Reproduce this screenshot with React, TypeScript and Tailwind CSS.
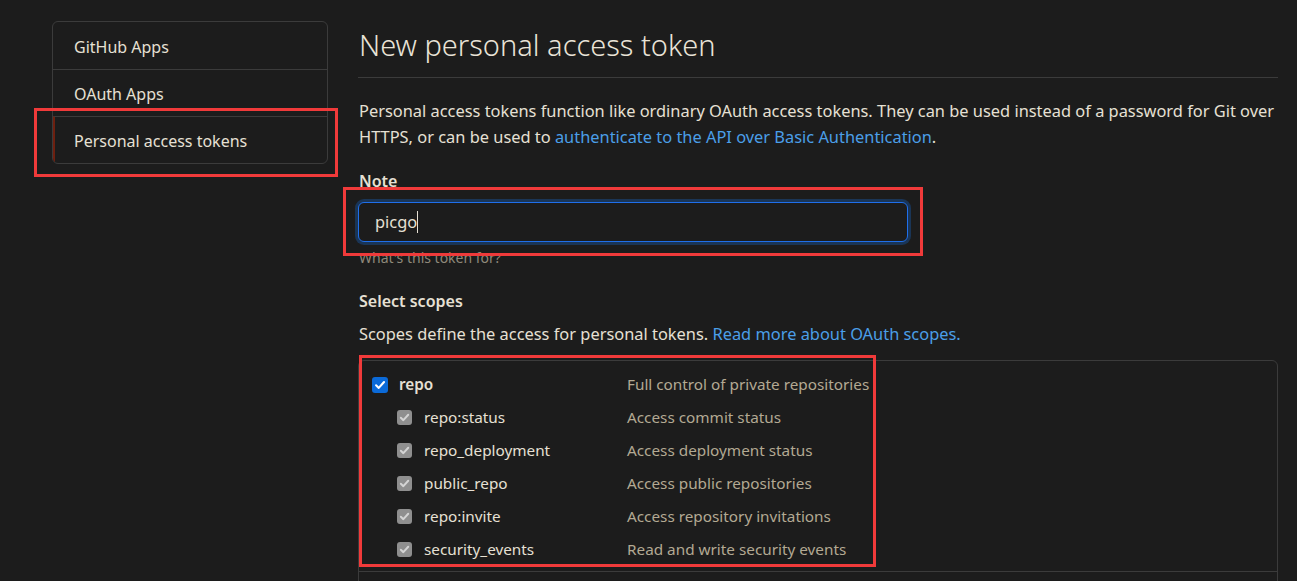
const scopes = [
  { name: "repo:status", desc: "Access commit status" },
  { name: "repo_deployment", desc: "Access deployment status" },
  { name: "public_repo", desc: "Access public repositories" },
  { name: "repo:invite", desc: "Access repository invitations" },
  { name: "security_events", desc: "Read and write security events" },
];

const Check = ({ className }: { className: string }) => (
  <svg viewBox="0 0 16 16" className={className} fill="none" stroke="currentColor" strokeWidth="2.4" strokeLinecap="round" strokeLinejoin="round">
    <path d="M3.5 8.3 6.6 11.3 12.6 4.6" />
  </svg>
);

export default function App() {
  return (
    <div
      className="h-[581px] overflow-hidden bg-[#1c1c1c] text-[#e6e0d4] flex pl-[52px] pt-[21px] gap-[30px]"
      style={{ fontFamily: '"Noto Sans", "Open Sans", sans-serif' }}
    >
      {/* sidebar */}
      <div className="relative w-[276px] shrink-0 self-start">
        <nav className="border border-[#3b3b3b] rounded-md text-[16px] overflow-hidden">
          <div className="h-[47px] flex items-center pl-[21px] pt-[2px]">GitHub Apps</div>
          <div className="h-[47px] flex items-center pl-[21px] pt-[2px] border-t border-[#3b3b3b]">OAuth Apps</div>
          <div className="h-[47px] flex items-center pl-[19px] pt-[2px] border-t border-[#3b3b3b] border-l-[3px] border-l-[#6e2010] -ml-px">
            Personal access tokens
          </div>
        </nav>
        <div className="absolute left-[-18px] top-[87px] w-[304px] h-[69px] border-[3px] border-[#f03a3a]" />
      </div>

      {/* content */}
      <div className="w-[920px] shrink-0">
        <h1 className="text-[29px] font-light leading-[48px] pl-px pb-[8px] border-b border-[#3b3b3b] text-[#e9e3d7]">
          New personal access token
        </h1>
        <p className="mt-[20px] pl-px text-[16.4px] leading-[26px]">
          Personal access tokens function like ordinary OAuth access tokens. They can be used instead of a password for Git over
          HTTPS, or can be used to <a className="text-[#4b9fe8]">authenticate to the API over Basic Authentication</a>.
        </p>

        <div className="mt-[19px] pl-px text-[16px] font-semibold leading-[24px]">Note</div>
        <div className="relative mt-[9px] w-[550px]">
          <div className="h-[40px] rounded-md border border-[#1f6feb] ring-[3px] ring-[#1a3556] bg-[#1c1c1c] flex items-center pl-[16px] text-[16.4px]">
            <span>picgo</span>
            <span className="inline-block w-px h-[22px] bg-[#e6e0d4]" />
          </div>
          <div className="absolute left-[-15px] top-[-15px] w-[580px] h-[69px] border-[3px] border-[#f03a3a]" />
        </div>
        <div className="mt-[7px] pl-px text-[14px] leading-[18px] text-[#8e8879]">What's this token for?</div>

        <div className="mt-[22px] pl-px text-[16px] font-semibold leading-[24px]">Select scopes</div>
        <p className="mt-[9px] pl-px text-[16.4px] leading-[24px]">
          Scopes define the access for personal tokens. <a className="text-[#4b9fe8]">Read more about OAuth scopes.</a>
        </p>

        <div className="relative mt-[14px] border border-[#3b3b3b] rounded-t-md h-[400px]">
          <div className="pt-[7px] pb-[5px] border-b border-[#3b3b3b] text-[15.3px]">
            <div className="h-[33px] flex items-center pl-[13px]">
              <span className="w-[16px] h-[16px] rounded-[3px] bg-[#0b6ad8] flex items-center justify-center text-white">
                <Check className="w-[14px] h-[14px]" />
              </span>
              <span className="ml-[11px] w-[228px] font-semibold">repo</span>
              <span className="text-[#b3a993]">Full control of private repositories</span>
            </div>
            {scopes.map((s) => (
              <div key={s.name} className="h-[33px] flex items-center pl-[38px]">
                <span className="w-[15px] h-[15px] rounded-[3px] bg-[#8f8f8f] flex items-center justify-center text-[#d4d4d4]">
                  <Check className="w-[13px] h-[13px]" />
                </span>
                <span className="ml-[12px] w-[203px]">{s.name}</span>
                <span className="text-[#b3a993]">{s.desc}</span>
              </div>
            ))}
          </div>
          <div className="absolute left-0 top-[-6px] w-[517px] h-[212px] border-[3px] border-[#f03a3a]" />
        </div>
      </div>
    </div>
  );
}
